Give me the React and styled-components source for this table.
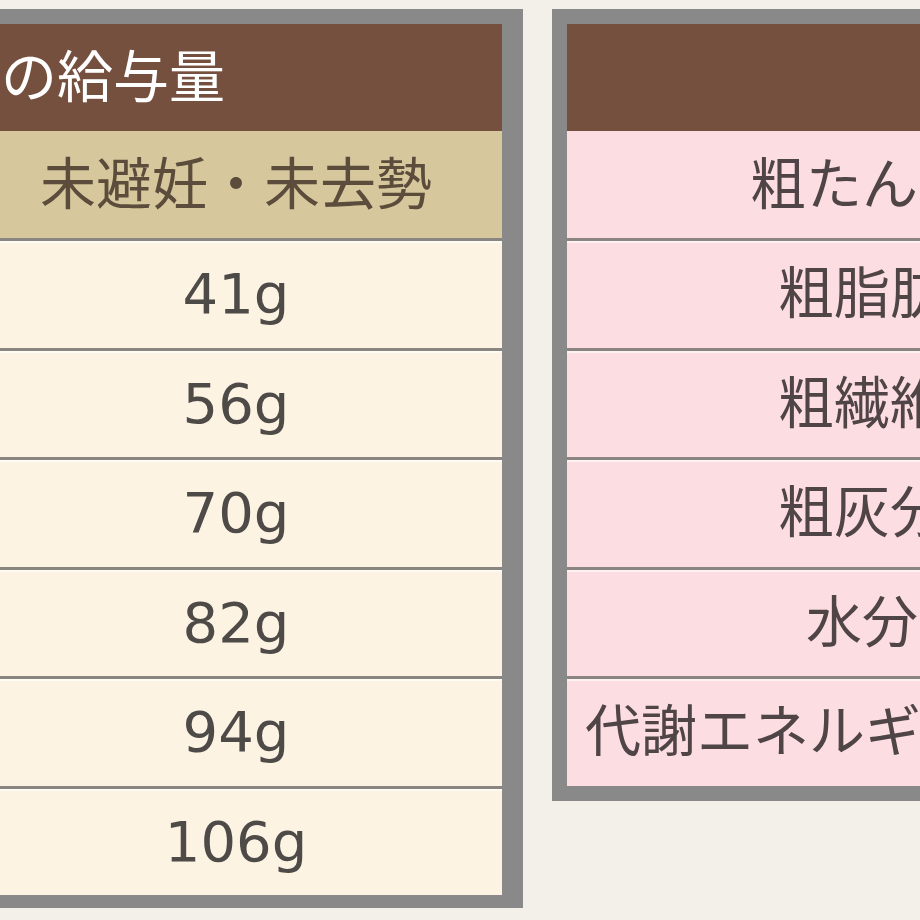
import React from 'react';
import styled, { createGlobalStyle } from 'styled-components';

const GlobalStyle = createGlobalStyle`
  html, body {
    margin: 0;
    padding: 0;
    background: #f2f0e9;
    overflow: hidden;
  }
  body {
    font-family: "DejaVu Sans", "Noto Sans CJK JP", sans-serif;
  }
`;

const Page = styled.div`
  display: flex;
  align-items: flex-start;
  gap: 29px;
  padding-top: 9px;
  margin-left: -30px;
  width: max-content;
`;

const Table = styled.div`
  display: flex;
  flex-direction: column;
  flex-shrink: 0;
  width: ${(p) => p.$width}px;
  border-style: solid;
  border-color: #898989;
  border-width: 15px ${(p) => p.$right}px ${(p) => p.$bottom}px ${(p) => p.$left}px;
`;

const Header = styled.div`
  height: 107px;
  display: flex;
  align-items: center;
  padding-left: ${(p) => p.$indent || 0}px;
  background: #76503f;
  color: #ffffff;
  font-size: 56px;
  line-height: 1;
  white-space: nowrap;
`;

const tones = {
  tan: { bg: '#d6c89c', fg: '#5b4c3b' },
  cream: { bg: '#fdf3e3', fg: '#4d4a47' },
  pink: { bg: '#fcdde2', fg: '#4f4446' },
};

const Row = styled.div`
  height: ${(p) => (p.$sep ? 106.5 : 107)}px;
  border-top: ${(p) => (p.$sep ? '3px solid #8a8580' : 'none')};
  box-shadow: ${(p) => (p.$sep ? 'inset 0 2px 0 rgba(255, 255, 255, 0.6)' : 'none')};
  display: flex;
  align-items: center;
  justify-content: ${(p) => (p.$align === 'left' ? 'flex-start' : 'center')};
  padding-left: ${(p) => (p.$align === 'left' ? 18 : 0)}px;
  background: ${(p) => tones[p.$tone].bg};
  color: ${(p) => tones[p.$tone].fg};
  font-size: 56px;
  line-height: 1;
  white-space: nowrap;
`;

const amounts = ['41g', '56g', '70g', '82g', '94g', '106g'];

const nutrients = [
  { label: '粗たん白' },
  { label: '粗脂肪' },
  { label: '粗繊維' },
  { label: '粗灰分' },
  { label: '水分' },
  { label: '代謝エネルギー', align: 'left' },
];

export default function App() {
  return (
    <>
      <GlobalStyle />
      <Page>
        <Table $width={532} $left={0} $right={21} $bottom={13}>
          <Header $indent={31}>の給与量</Header>
          <Row $tone="tan">未避妊・未去勢</Row>
          {amounts.map((a) => (
            <Row key={a} $tone="cream" $sep>
              {a}
            </Row>
          ))}
        </Table>
        <Table $width={590} $left={15} $right={15} $bottom={15}>
          <Header />
          {nutrients.map((n, i) => (
            <Row key={n.label} $tone="pink" $sep={i > 0} $align={n.align}>
              {n.label}
            </Row>
          ))}
        </Table>
      </Page>
    </>
  );
}
